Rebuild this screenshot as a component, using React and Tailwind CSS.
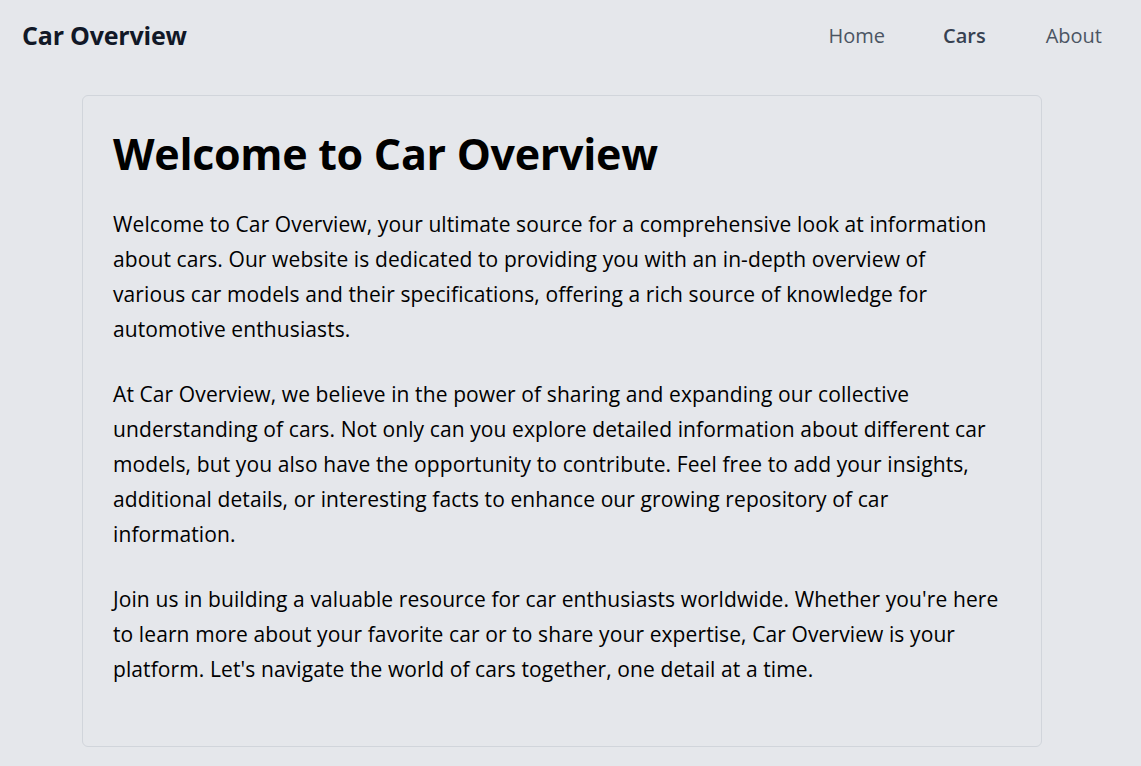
export default function App() {
  return (
    <div className="min-h-screen bg-[#e5e7eb] font-['Open_Sans','Noto_Sans',sans-serif]">
      <div className="w-[1124px]">
        <header className="flex h-[72px] items-center justify-between px-[22px]">
          <a className="text-[25px] font-bold tracking-[-0.2px] text-[#111827]">Car Overview</a>
          <nav className="flex items-center text-[20px] text-[#4b5563]">
            <a className="mr-[58px]">Home</a>
            <a className="mr-[60px] font-semibold text-[#374151]">Cars</a>
            <a>About</a>
          </nav>
        </header>
        <main className="flex justify-center pt-[23px] pb-5">
          <section className="w-[960px] rounded-md border border-[#d1d5db] pl-[30px] pr-[39px] pt-[32px] pb-[39px] text-black">
            <h1 className="mb-[27px] text-[43px] font-bold leading-[1.2] tracking-[-0.3px]">Welcome to Car Overview</h1>
            <div className="text-[21px] leading-[35px] tracking-[0.1px]">
              <p className="mb-[30px]">
                Welcome to Car Overview, your ultimate source for a comprehensive look at information about cars. Our website is dedicated to providing you with an in-depth overview of various car models and their specifications, offering a rich source of knowledge for automotive enthusiasts.
              </p>
              <p className="mb-[30px]">
                At Car Overview, we believe in the power of sharing and expanding our collective understanding of cars. Not only can you explore detailed information about different car models, but you also have the opportunity to contribute. Feel free to add your insights, additional details, or interesting facts to enhance our growing repository of car information.
              </p>
              <p className="mb-[20px]">
                Join us in building a valuable resource for car enthusiasts worldwide. Whether you're here to learn more about your favorite car or to share your expertise, Car Overview is your platform. Let's navigate the world of cars together, one detail at a time.
              </p>
            </div>
          </section>
        </main>
      </div>
    </div>
  );
}
